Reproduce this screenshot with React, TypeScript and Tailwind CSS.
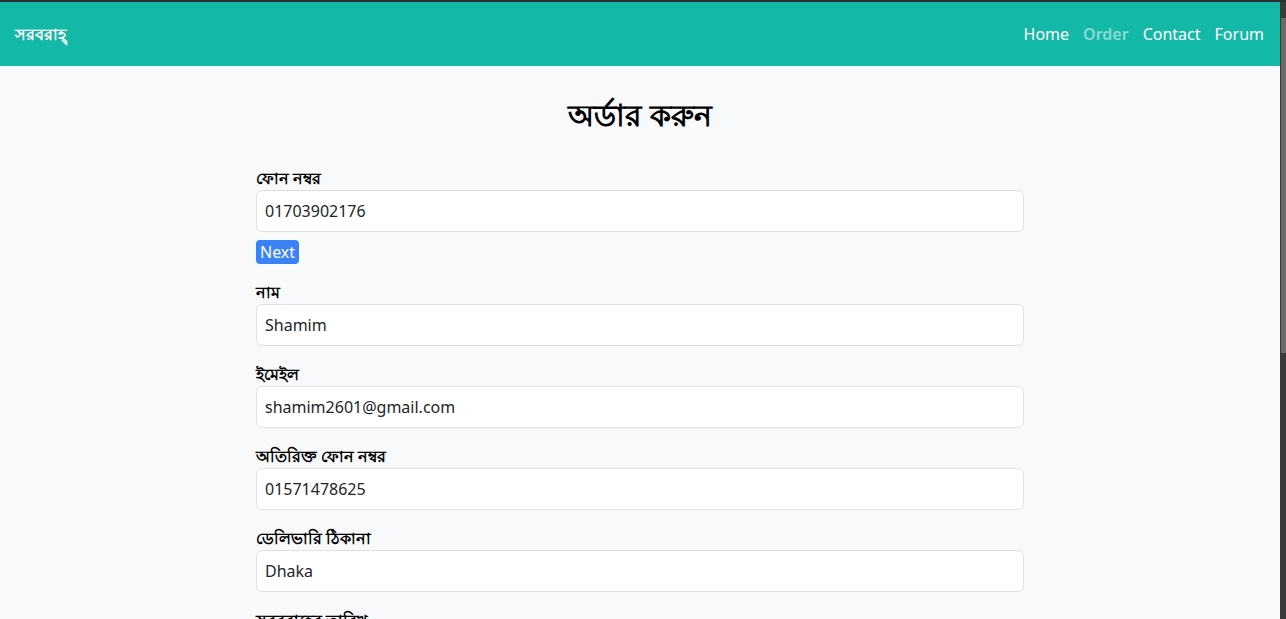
import React from 'react';

const font = { fontFamily: '"Noto Sans", "Open Sans", sans-serif' };

const fields = [
  { label: 'নাম', value: 'Shamim' },
  { label: 'ইমেইল', value: 'shamim2601@gmail.com' },
  { label: 'অতিরিক্ত ফোন নম্বর', value: '01571478625' },
  { label: 'ডেলিভারি ঠিকানা', value: 'Dhaka' },
  { label: 'সরবরাহের তারিখ', value: '' },
];

const Field = ({ label, value }: { label: string; value: string }) => (
  <div className="mb-4">
    <label className="block text-base leading-6 font-semibold text-black">{label}</label>
    <input
      readOnly
      value={value}
      className="block w-full h-[42px] px-2 rounded-md border border-[#dee2e6] bg-white text-base text-[#212529] outline-none"
    />
  </div>
);

const App = () => {
  return (
    <div className="h-screen overflow-hidden flex flex-col bg-[#2e2e2e]" style={font}>
      <div className="h-[2px] shrink-0" />
      <div className="flex flex-1 min-h-0">
        <div className="flex-1 flex flex-col bg-[#f8f9fa] min-w-0">
          <nav className="h-16 shrink-0 bg-[#14b8a6] flex items-center justify-between pl-[15px] pr-4">
            <span className="text-white text-base font-semibold">সরবরাহ্</span>
            <ul className="flex gap-[14px] text-base">
              <li className="text-white">Home</li>
              <li className="text-white/50 font-semibold">Order</li>
              <li className="text-white">Contact</li>
              <li className="text-white">Forum</li>
            </ul>
          </nav>
          <main className="pt-[30px] flex flex-col items-center">
            <h1 className="text-[30px] leading-[38px] font-semibold text-black mb-8">অর্ডার করুন</h1>
            <form className="w-[768px]">
              <div className="mb-4">
                <label className="block text-base leading-6 font-semibold text-black">ফোন নম্বর</label>
                <input
                  readOnly
                  value="01703902176"
                  className="block w-full h-[42px] px-2 rounded-md border border-[#dee2e6] bg-white text-base text-[#212529] outline-none"
                />
                <button
                  type="button"
                  className="mt-2 h-6 px-1 rounded bg-[#3b82f6] text-white text-base leading-6"
                >
                  Next
                </button>
              </div>
              {fields.map((f) => (
                <Field key={f.label} label={f.label} value={f.value} />
              ))}
            </form>
          </main>
        </div>
        <div className="w-[6px] shrink-0 bg-[#3a3a3a] flex flex-col pt-4">
          <div className="h-[335px] ml-[1px] bg-[#6a6a6a]" />
        </div>
      </div>
    </div>
  );
};

export default App;
